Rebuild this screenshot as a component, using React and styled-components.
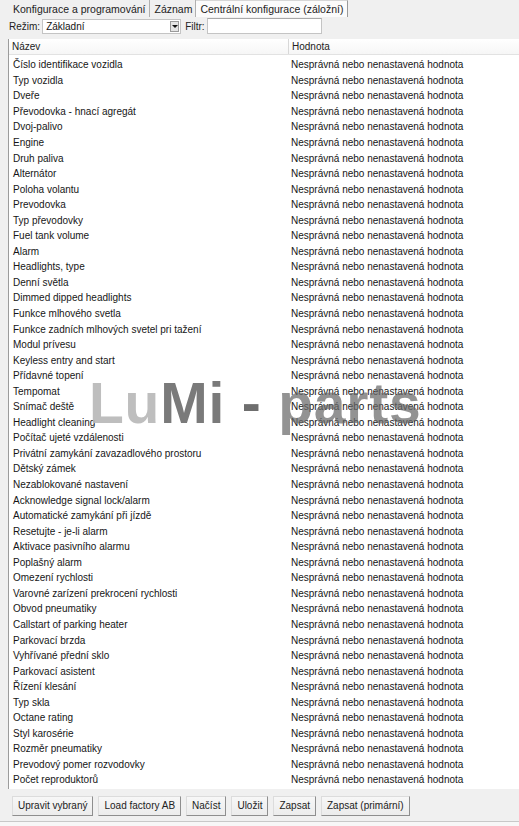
import React from 'react'
import styled, { createGlobalStyle } from 'styled-components'

const GlobalStyle = createGlobalStyle`
  html, body {
    margin: 0;
    padding: 0;
    background: #f0f0f0;
  }
  body {
    font-family: "Liberation Sans", Arial, sans-serif;
    font-size: 10px;
    color: #151515;
  }
`

const Window = styled.div`
  width: 519px;
  height: 826px;
  display: flex;
  flex-direction: column;
  background: #f0f0f0;
  overflow: hidden;
`

const TabBar = styled.div`
  height: 17px;
  display: flex;
  align-items: stretch;
  padding-left: 8px;
`

const Tab = styled.div`
  display: flex;
  align-items: center;
  padding: 0 ${p => (p.$active ? '4px' : '3px')} 0 ${p => (p.$active ? '4px' : '5px')};
  font-size: 10.5px;
  color: #222;
  background: ${p => (p.$active ? '#fbfbfb' : '#f0f0f0')};
  border-right: 1px solid ${p => (p.$active ? '#9a9a9a' : '#b0b0b0')};
  border-top: ${p => (p.$active ? '1px solid #d6d6d6' : '0')};
`

const ToolRow = styled.div`
  height: 18px;
  display: flex;
  align-items: center;
  padding-left: 9px;
  margin-bottom: 4px;
  gap: 2px;
`

const Label = styled.span`
  font-size: 10px;
  color: #222;
`

const Combo = styled.div`
  width: 139px;
  height: 15px;
  display: flex;
  align-items: center;
  justify-content: space-between;
  background: #fff;
  border: 1px solid #c4c4c4;
  box-sizing: border-box;
  padding-left: 3px;
  font-size: 10px;
  margin-right: 2px;
`

const DropBtn = styled.div`
  width: 9px;
  height: 11px;
  margin-right: 1px;
  background: #e4e4e4;
  border: 1px solid #9a9a9a;
  box-sizing: border-box;
  display: flex;
  align-items: center;
  justify-content: center;
  &::after {
    content: '';
    border-left: 3px solid transparent;
    border-right: 3px solid transparent;
    border-top: 3px solid #111;
  }
`

const FilterInput = styled.div`
  width: 115px;
  height: 16px;
  background: #fff;
  border: 1px solid #c4c4c4;
  border-top-color: #a8a8a8;
  box-sizing: border-box;
`

const ListBox = styled.div`
  position: relative;
  margin-left: 8px;
  border-left: 1px solid #9c9c9c;
  background: #fff;
  display: flex;
  flex-direction: column;
`

const HeaderRow = styled.div`
  height: 16px;
  display: grid;
  grid-template-columns: 280px 1fr;
  background: linear-gradient(#ffffff, #f6f6f6);
  border-bottom: 1px solid #e2e2e2;
  box-sizing: border-box;
`

const HeaderCell = styled.div`
  display: flex;
  align-items: center;
  padding-left: 3px;
  font-size: 10px;
  color: #222;
  border-right: ${p => (p.$first ? '1px solid #d8d8d8' : '0')};
`

const Rows = styled.div`
  padding: 2px 0 1px;
`

const Row = styled.div`
  height: 15.56px;
  display: grid;
  grid-template-columns: 280px 1fr;
  align-items: center;
`

const Cell = styled.div`
  padding-left: ${p => (p.$value ? '2px' : '4px')};
  white-space: nowrap;
  font-size: 10px;
  color: #161616;
`

const Watermark = styled.div`
  position: absolute;
  left: 80px;
  top: 336px;
  font-family: "Liberation Sans", Arial, sans-serif;
  font-weight: bold;
  font-size: 57px;
  letter-spacing: 0.8px;
  white-space: nowrap;
  pointer-events: none;
  line-height: 1;
`

const Mark = styled.span`
  color: ${p => p.$color};
  opacity: ${p => p.$opacity || 1};
`

const ButtonBar = styled.div`
  display: flex;
  gap: 5px;
  padding: 7px 0 5px 12px;
  background: #f0f0f0;
`

const Button = styled.div`
  height: 20px;
  display: flex;
  align-items: center;
  padding: 0 5px;
  box-sizing: border-box;
  font-size: 10px;
  color: #222;
  background: linear-gradient(#f7f7f7, #ececec);
  border: 1px solid #dcdcdc;
  border-right-color: #8e8e8e;
  border-bottom-color: #8e8e8e;
`

const BottomStrip = styled.div`
  flex: 1;
  background: #f7f7f7;
  border-top: 1px solid #c8c8c8;
`

const names = [
  'Číslo identifikace vozidla',
  'Typ vozidla',
  'Dveře',
  'Převodovka - hnací agregát',
  'Dvoj-palivo',
  'Engine',
  'Druh paliva',
  'Alternátor',
  'Poloha volantu',
  'Prevodovka',
  'Typ převodovky',
  'Fuel tank volume',
  'Alarm',
  'Headlights, type',
  'Denní světla',
  'Dimmed dipped headlights',
  'Funkce mlhového svetla',
  'Funkce zadních mlhových svetel pri tažení',
  'Modul prívesu',
  'Keyless entry and start',
  'Přídavné topení',
  'Tempomat',
  'Snímač deště',
  'Headlight cleaning',
  'Počítač ujeté vzdálenosti',
  'Privátní zamykání zavazadlového prostoru',
  'Dětský zámek',
  'Nezablokované nastavení',
  'Acknowledge signal lock/alarm',
  'Automatické zamykání při jízdě',
  'Resetujte - je-li alarm',
  'Aktivace pasivního alarmu',
  'Poplašný alarm',
  'Omezení rychlosti',
  'Varovné zarízení prekrocení rychlosti',
  'Obvod pneumatiky',
  'Callstart of parking heater',
  'Parkovací brzda',
  'Vyhřívané přední sklo',
  'Parkovací asistent',
  'Řízení klesání',
  'Typ skla',
  'Octane rating',
  'Styl karosérie',
  'Rozměr pneumatiky',
  'Prevodový pomer rozvodovky',
  'Počet reproduktorů',
]

const buttons = ['Upravit vybraný', 'Load factory AB', 'Načíst', 'Uložit', 'Zapsat', 'Zapsat (primární)']

export default function App() {
  return (
    <Window>
      <GlobalStyle />
      <TabBar>
        <Tab>Konfigurace a programování</Tab>
        <Tab>Záznam</Tab>
        <Tab $active>Centrální konfigurace (záložní)</Tab>
      </TabBar>
      <ToolRow>
        <Label>Režim:</Label>
        <Combo>
          Základní
          <DropBtn />
        </Combo>
        <Label>Filtr:</Label>
        <FilterInput />
      </ToolRow>
      <ListBox>
        <HeaderRow>
          <HeaderCell $first>Název</HeaderCell>
          <HeaderCell>Hodnota</HeaderCell>
        </HeaderRow>
        <Rows>
          {names.map(n => (
            <Row key={n}>
              <Cell>{n}</Cell>
              <Cell $value>Nesprávná nebo nenastavená hodnota</Cell>
            </Row>
          ))}
        </Rows>
        <Watermark>
          <Mark $color="#b8b8b8" $opacity={0.9}>Lu</Mark>
          <Mark $color="#6f6f6f" $opacity={0.92}>Mi</Mark>
          <Mark $color="#5f5f5f" $opacity={0.9}> - </Mark>
          <Mark $color="#6a6a6a" $opacity={0.72}>parts</Mark>
        </Watermark>
      </ListBox>
      <ButtonBar>
        {buttons.map(b => (
          <Button key={b}>{b}</Button>
        ))}
      </ButtonBar>
      <BottomStrip />
    </Window>
  )
}
